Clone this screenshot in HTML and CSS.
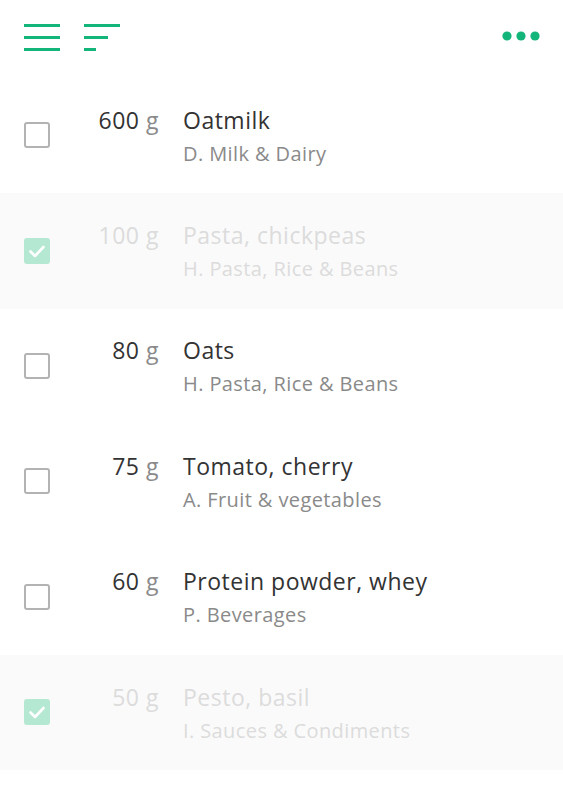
FILE: index.html
```html
<!DOCTYPE html>
<html>
<head>
<meta charset="utf-8">
<link rel="stylesheet" href="styles.css">
</head>
<body>
<div class="app">
  <header class="topbar">
    <div class="left-icons">
      <svg class="icon" width="36" height="30" viewBox="0 0 36 30">
        <rect x="0" y="3" width="36" height="3" fill="#13b57a"/>
        <rect x="0" y="15" width="36" height="3" fill="#13b57a"/>
        <rect x="0" y="27" width="36" height="3" fill="#13b57a"/>
      </svg>
      <svg class="icon" width="36" height="30" viewBox="0 0 36 30">
        <rect x="0" y="3" width="36" height="3" fill="#13b57a"/>
        <rect x="0" y="15" width="24" height="3" fill="#13b57a"/>
        <rect x="0" y="27" width="12" height="3" fill="#13b57a"/>
      </svg>
    </div>
    <svg class="more" width="38" height="10" viewBox="0 0 38 10">
      <circle cx="5" cy="5" r="4.6" fill="#13b57a"/>
      <circle cx="19" cy="5" r="4.6" fill="#13b57a"/>
      <circle cx="33" cy="5" r="4.6" fill="#13b57a"/>
    </svg>
  </header>
  <ul class="list">
    <li class="row">
      <span class="box"></span>
      <span class="amount">600 <span class="unit">g</span></span>
      <div class="info"><div class="name">Oatmilk</div><div class="cat">D. Milk &amp; Dairy</div></div>
    </li>
    <li class="row done">
      <span class="box"><svg width="26" height="26" viewBox="0 0 26 26"><path d="M6.5 13.5 L11 18 L19.5 9" fill="none" stroke="#fff" stroke-width="2.6" stroke-linecap="round" stroke-linejoin="round"/></svg></span>
      <span class="amount">100 <span class="unit">g</span></span>
      <div class="info"><div class="name">Pasta, chickpeas</div><div class="cat">H. Pasta, Rice &amp; Beans</div></div>
    </li>
    <li class="row">
      <span class="box"></span>
      <span class="amount">80 <span class="unit">g</span></span>
      <div class="info"><div class="name">Oats</div><div class="cat">H. Pasta, Rice &amp; Beans</div></div>
    </li>
    <li class="row">
      <span class="box"></span>
      <span class="amount">75 <span class="unit">g</span></span>
      <div class="info"><div class="name">Tomato, cherry</div><div class="cat">A. Fruit &amp; vegetables</div></div>
    </li>
    <li class="row">
      <span class="box"></span>
      <span class="amount">60 <span class="unit">g</span></span>
      <div class="info"><div class="name">Protein powder, whey</div><div class="cat">P. Beverages</div></div>
    </li>
    <li class="row done">
      <span class="box"><svg width="26" height="26" viewBox="0 0 26 26"><path d="M6.5 13.5 L11 18 L19.5 9" fill="none" stroke="#fff" stroke-width="2.6" stroke-linecap="round" stroke-linejoin="round"/></svg></span>
      <span class="amount">50 <span class="unit">g</span></span>
      <div class="info"><div class="name">Pesto, basil</div><div class="cat">I. Sauces &amp; Condiments</div></div>
    </li>
  </ul>
</div>
</body>
</html>
```
FILE: styles.css
```css
* { box-sizing: border-box; }
html, body { margin: 0; padding: 0; background: #fff; }
body { font-family: "Open Sans", "Liberation Sans", sans-serif; color: #333; }
.app { width: 563px; }
.topbar {
  height: 78px;
  display: flex;
  align-items: center;
  justify-content: space-between;
  padding: 0 23px 0 24px;
}
.left-icons { display: flex; gap: 24px; margin-top: -7px; }
.icon { display: block; }
.more { display: block; margin-top: -7px; }
.list { list-style: none; margin: 0; padding: 0; }
.row {
  height: 115.4px;
  display: flex;
  align-items: center;
  padding-left: 24px;
}
.row.done { background: #fafafa; }
.box {
  width: 26px;
  height: 26px;
  flex: none;
  border: 2px solid #b3b3b3;
  border-radius: 3px;
  background: #fff;
  margin-top: -1px;
}
.done .box {
  border: none;
  background: #b5e8d2;
}
.done .box svg { display: block; }
.amount {
  width: 109px;
  flex: none;
  text-align: right;
  font-size: 23px;
  line-height: 30px;
  letter-spacing: 0.5px;
  align-self: center;
  margin-top: -32px;
  color: #333;
}
.unit { color: #8a8a8a; }
.info { margin-left: 24px; }
.name { font-size: 23px; line-height: 30px; letter-spacing: 0.5px; color: #333; }
.cat { font-size: 20px; line-height: 26px; letter-spacing: 0.4px; margin-top: 6px; color: #8a8a8a; }
.done .amount, .done .unit, .done .name, .done .cat { color: #dcdcdc; }
```
